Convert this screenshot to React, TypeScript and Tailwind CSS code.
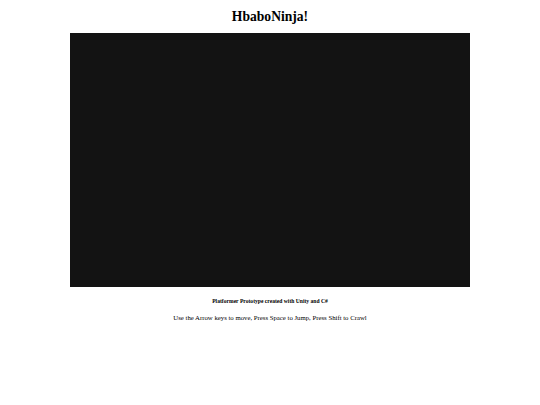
export default function App() {
  return (
    <div
      className="flex min-h-[405px] w-full flex-col items-center bg-white text-black"
      style={{ fontFamily: '"Liberation Serif", "Times New Roman", serif' }}
    >
      <h1 className="mt-[7px] h-[19px] text-[13.6px] font-bold leading-[19px]">HbaboNinja!</h1>
      <div className="mt-[7px] h-[254px] w-[400px] bg-[#131313]" />
      <p className="mt-[10px] text-[5.6px] font-bold leading-[8px]">
        Platformer Prototype created with Unity and C#
      </p>
      <p className="mt-[8px] text-[6.75px] leading-[9px]">
        Use the Arrow keys to move, Press Space to Jump, Press Shift to Crawl
      </p>
    </div>
  );
}
